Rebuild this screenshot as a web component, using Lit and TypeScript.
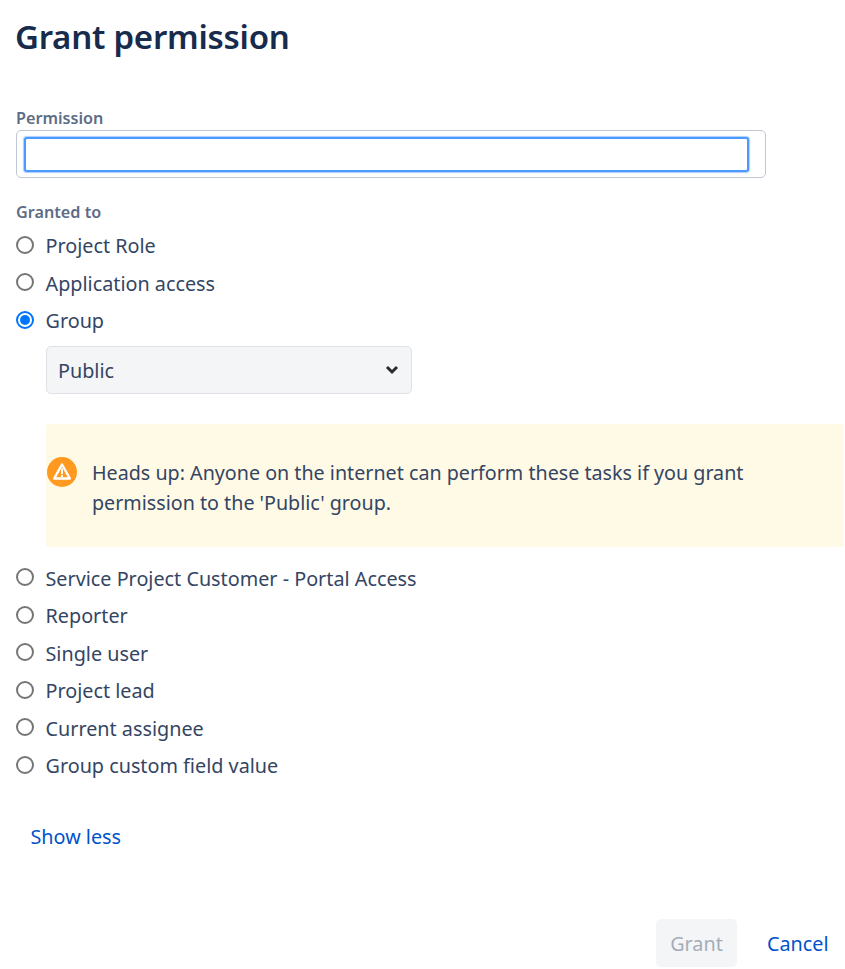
import { LitElement, html, css } from "lit";
import { customElement } from "lit/decorators.js";

const before = ["Project Role", "Application access"];
const after = ["Service Project Customer - Portal Access", "Reporter", "Single user", "Project lead", "Current assignee", "Group custom field value"];

@customElement("app-root")
export class AppRoot extends LitElement {
  static styles = css`
    :host { display: block; width: 845px; height: 969px; overflow: hidden; background: #fff; color: #172b4d; font-family: "Noto Sans", sans-serif; font-size: 19.8px; box-sizing: border-box; }
    * { box-sizing: border-box; }
    .page { display: flex; flex-direction: column; padding: 0 0 0 16px; height: 969px; }
    h1 { margin: 15px 0 0 -1px; font-size: 33px; line-height: 44px; font-weight: 600; letter-spacing: -0.25px; color: #172b4d; }
    .label { font-size: 16.2px; line-height: 20px; font-weight: 600; color: #5e6c84; }
    .perm { margin-top: 49px; }
    .box { width: 750px; height: 48px; margin-top: 2px; border: 1px solid #c1c7d0; border-radius: 5px; padding: 6px 16px 6px 7px; }
    .box input { display: block; width: 100%; height: 35px; border: 2px solid #4c9aff; border-radius: 3px; outline: none; background: #fff; box-shadow: 0 0 1px 1px #a9ccff; }
    .granted { margin-top: 24px; margin-bottom: 5px; }
    .row { display: flex; align-items: center; height: 37.5px; color: #344563; font-size: 19.8px; }
    .radio { width: 18px; height: 18px; margin: 0 11.5px 0 0; border: 2px solid #767676; border-radius: 50%; background: #fff; flex: none; position: relative; top: -1px; }
    .radio.on { border: 2px solid #0075ff; }
    .radio.on::after { content: ""; position: absolute; inset: 2px; border-radius: 50%; background: #0075ff; }
    .sel { margin: 6px 0 0 30px; width: 366px; height: 48px; background: #f4f5f7; border: 1px solid #dfe1e6; border-radius: 5px; display: flex; align-items: center; justify-content: space-between; padding: 0 12px 0 11px; color: #344563; }
    .sel span { position: relative; top: 1px; }
    .warn { margin: 30px 0 0 30px; width: 798px; height: 123px; background: #fffae6; border-radius: 3px; display: flex; padding: 33px 16px 0 1px; gap: 15px; line-height: 30px; color: #344563; font-size: 19.7px; }
    .warn svg { flex: none; }
    .warn p { margin: 1px 0 0; }
    .after { margin-top: 13px; }
    .link { color: #0052cc; font-size: 19.8px; }
    .more { margin: 37px 0 0 14.5px; line-height: 30px; }
    .actions { margin-top: auto; display: flex; justify-content: flex-end; align-items: center; padding: 0 17px 2px 0; gap: 30px; }
    .grant { width: 81px; height: 48px; background: #f4f5f7; color: #a5adba; border-radius: 5px; display: flex; align-items: center; justify-content: center; padding-top: 1px; }
    .cancel { padding-top: 1px; width: 61px; white-space: nowrap; }
  `;
  row(t: string, on = false) {
    return html`<div class="row"><span class="radio ${on ? "on" : ""}"></span><span>${t}</span></div>`;
  }
  render() {
    return html`<div class="page">
      <h1>Grant permission</h1>
      <div class="label perm">Permission</div>
      <div class="box"><input aria-label="Permission" /></div>
      <div class="label granted">Granted to</div>
      ${before.map((t) => this.row(t))}
      ${this.row("Group", true)}
      <div class="sel"><span>Public</span>
        <svg width="14" height="10" viewBox="0 0 14 10"><path d="M2 2l5 5 5-5" fill="none" stroke="#2b2b2b" stroke-width="3"/></svg></div>
      <div class="warn">
        <svg width="30" height="30" viewBox="0 0 30 30"><circle cx="15" cy="15" r="15" fill="#ff991f"/><path d="M15 7.5l7.8 14H7.2z" fill="#ff991f" stroke="#fff" stroke-width="2.4" stroke-linejoin="round"/><rect x="14" y="11.5" width="2" height="5.5" fill="#fff"/><rect x="14" y="18" width="2" height="2" fill="#fff"/></svg>
        <p>Heads up: Anyone on the internet can perform these tasks if you grant<br />permission to the 'Public' group.</p>
      </div>
      <div class="after">${after.map((t) => this.row(t))}</div>
      <div class="link more">Show less</div>
      <div class="actions"><div class="grant">Grant</div><div class="link cancel">Cancel</div></div>
    </div>`;
  }
}
